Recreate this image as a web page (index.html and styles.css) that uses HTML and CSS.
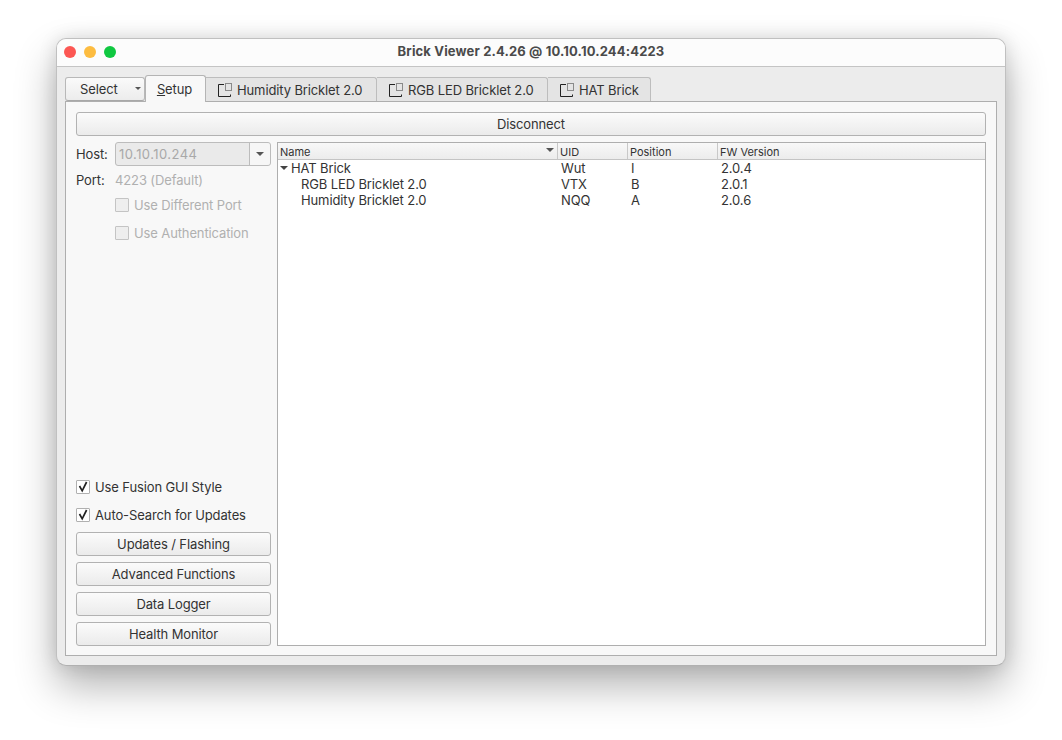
FILE: index.html
```html
<!DOCTYPE html>
<html lang="en">
<head>
<meta charset="utf-8">
<title>Brick Viewer</title>
<link rel="stylesheet" href="styles.css">
</head>
<body>
<div class="window">
  <header class="titlebar">
    <div class="lights"><span class="light red"></span><span class="light yellow"></span><span class="light green"></span></div>
    <div class="title">Brick Viewer 2.4.26 @ 10.10.10.244:4223</div>
  </header>
  <div class="content">
    <div class="tabbar">
      <div class="select">Select<span class="caret small"></span></div>
      <div class="tab active"><span><u>S</u>etup</span></div>
      <div class="tab w171"><svg class="ticon" width="14" height="14" viewBox="0 0 14 14"><path d="M6 1.5H.5V13.5H12.5V11.5" fill="none" stroke="#222"/><rect x="7.5" y=".5" width="6" height="7" fill="none" stroke="#8a8a8a"/></svg><span>Humidity Bricklet 2.0</span></div>
      <div class="tab w171"><svg class="ticon" width="14" height="14" viewBox="0 0 14 14"><path d="M6 1.5H.5V13.5H12.5V11.5" fill="none" stroke="#222"/><rect x="7.5" y=".5" width="6" height="7" fill="none" stroke="#8a8a8a"/></svg><span>RGB LED Bricklet 2.0</span></div>
      <div class="tab w103"><svg class="ticon" width="14" height="14" viewBox="0 0 14 14"><path d="M6 1.5H.5V13.5H12.5V11.5" fill="none" stroke="#222"/><rect x="7.5" y=".5" width="6" height="7" fill="none" stroke="#8a8a8a"/></svg><span>HAT Brick</span></div>
    </div>
    <div class="pane">
      <button class="btn">Disconnect</button>
      <div class="main">
        <aside class="side">
          <div class="host-row">
            <label class="lbl">Host:</label>
            <div class="combo"><span class="combo-text">10.10.10.244</span><span class="combo-arrow"><span class="caret"></span></span></div>
          </div>
          <div class="port-row"><label class="lbl">Port:</label><span class="port-val">4223 (Default)</span></div>
          <div class="check disabled indent first"><span class="box"></span>Use Different Port</div>
          <div class="check disabled indent"><span class="box"></span>Use Authentication</div>
          <div class="spacer"></div>
          <div class="check"><span class="box"><svg width="12" height="12" viewBox="0 0 12 12"><path d="M2.5 5 5.2 9.8 9.6 1" fill="none" stroke="#222" stroke-width="1.7"/></svg></span>Use Fusion GUI Style</div>
          <div class="check second"><span class="box"><svg width="12" height="12" viewBox="0 0 12 12"><path d="M2.5 5 5.2 9.8 9.6 1" fill="none" stroke="#222" stroke-width="1.7"/></svg></span>Auto-Search for Updates</div>
          <div class="actions">
            <button class="btn">Updates / Flashing</button>
            <button class="btn">Advanced Functions</button>
            <button class="btn">Data Logger</button>
            <button class="btn">Health Monitor</button>
          </div>
        </aside>
        <section class="tree">
          <div class="row head">
            <div class="c name">Name<span class="caret sort"></span></div>
            <div class="c uid">UID</div>
            <div class="c pos">Position</div>
            <div class="c fw">FW Version</div>
          </div>
          <div class="body">
            <div class="row item"><div class="c name parent"><span class="caret expand"></span>HAT Brick</div><div class="c uid">Wut</div><div class="c pos">I</div><div class="c fw">2.0.4</div></div>
            <div class="row item"><div class="c name child">RGB LED Bricklet 2.0</div><div class="c uid">VTX</div><div class="c pos">B</div><div class="c fw">2.0.1</div></div>
            <div class="row item"><div class="c name child">Humidity Bricklet 2.0</div><div class="c uid">NQQ</div><div class="c pos">A</div><div class="c fw">2.0.6</div></div>
          </div>
        </section>
      </div>
    </div>
  </div>
</div>
</body>
</html>
```
FILE: styles.css
```css
* { box-sizing: border-box; }
html, body { margin: 0; height: 100%; }
body {
  width: 1062px; height: 740px; overflow: hidden; background: #fff;
  padding: 38px 56px 74px;
  font-family: Inter, "Liberation Sans", sans-serif;
  font-size: 13px; color: #333; letter-spacing: -.12px;
}
.window {
  width: 950px; height: 628px; display: flex; flex-direction: column;
  border-radius: 10px; background: #ececec; border: 1px solid #c0c0c0; border-bottom-color: #b0b0b0;
  box-shadow: 0 20px 40px rgba(0,0,0,.3), 0 0 18px rgba(0,0,0,.12);
}
.titlebar {
  height: 28px; flex: none; position: relative; display: flex; align-items: center; justify-content: center;
  padding-bottom: 3px;
  background: #fcfcfc; border-bottom: 1px solid #c4c4c4; border-radius: 9px 9px 0 0;
}
.lights { position: absolute; left: 7px; top: 7px; display: flex; gap: 8px; }
.light { width: 12px; height: 12px; border-radius: 50%; }
.red { background: #fc5753; }
.yellow { background: #fdbc40; }
.green { background: #10c841; }
.title { font-weight: 700; font-size: 13px; color: #4a4a4a; letter-spacing: .15px; }
.content { flex: 1; padding: 8px 8px 9px; display: flex; flex-direction: column; min-height: 0; }
.tabbar { display: flex; height: 26px; flex: none; align-items: flex-end; position: relative; z-index: 1; }
.select {
  width: 80px; height: 24px; position: relative; display: flex; align-items: center; padding-left: 14px;
  background: linear-gradient(#fafafa, #ececec); border: 1px solid #b8b8b8; border-bottom-color: #a8a8a8; border-radius: 3px;
}
.caret { display: inline-block; width: 0; height: 0; border-left: 4px solid transparent; border-right: 4px solid transparent; border-top: 4px solid #555; }
.caret.small { position: absolute; right: 3px; top: 9px; border-left-width: 3px; border-right-width: 3px; border-top-width: 3px; }
.tab {
  height: 24px; display: flex; align-items: center; gap: 5px; padding: 1px 0 0 12px;
  background: #e4e4e4; border: 1px solid #bdbdbd; border-left: 0; border-bottom: 0; border-radius: 0 3px 0 0;
}
.tab.active {
  width: 61px; height: 27px; margin-bottom: -1px; justify-content: center; padding: 0 2px 0 0;
  background: #f8f8f8; border: 1px solid #b4b4b4; border-bottom: 0; border-radius: 3px 3px 0 0;
}
.w171 { width: 171px; }
.w103 { width: 103px; }
.ticon { flex: none; }
.pane {
  flex: 1; min-height: 0; display: flex; flex-direction: column; gap: 6px;
  background: #f8f8f8; border: 1px solid #aeaeae; padding: 10px 10px 9px;
}
.btn {
  display: block; width: 100%; height: 24px; padding: 0; font: inherit; color: inherit; letter-spacing: inherit;
  background: linear-gradient(#fbfbfb, #ebebeb); border: 1px solid #b2b2b2; border-radius: 3px;
}
.main { flex: 1; min-height: 0; display: flex; gap: 6px; }
.side { width: 195px; flex: none; display: flex; flex-direction: column; }
.host-row { display: flex; align-items: center; height: 24px; }
.lbl { width: 39px; flex: none; color: #333; }
.combo {
  flex: 1; height: 24px; display: flex; background: #eaeaea; border: 1px solid #bcbcbc; border-radius: 3px; color: #a8a8a8;
}
.combo-text { flex: 1; padding-left: 3px; line-height: 22px; letter-spacing: .45px; }
.combo-arrow { width: 21px; display: flex; align-items: center; justify-content: center; border-left: 1px solid #bcbcbc; background: #f6f6f6; border-radius: 0 3px 3px 0; }
.port-row { display: flex; height: 16px; margin-top: 6px; align-items: center; }
.port-val { color: #b0b0b0; }
.check { display: flex; align-items: center; height: 14px; gap: 5px; }
.check.indent { margin-left: 39px; margin-top: 14px; }
.check.first { margin-top: 10px; }
.check.second { margin-top: 14px; }
.check.disabled { color: #b0b0b0; }
.box { width: 14px; height: 14px; flex: none; display: flex; align-items: center; justify-content: center; background: #fff; border: 1px solid #b0b0b0; border-radius: 1px; }
.disabled .box { background: #eeeeee; border-color: #c4c4c4; }
.spacer { flex: 1; }
.actions { display: flex; flex-direction: column; gap: 6px; margin-top: 10px; }
.tree { flex: 1; min-width: 0; display: flex; flex-direction: column; background: #fff; border: 1px solid #aeaeae; }
.row { display: flex; }
.head { height: 17px; flex: none; background: linear-gradient(#f8f8f8, #ececec); border-bottom: 1px solid #c4c4c4; font-size: 11px; line-height: 18px; letter-spacing: 0; }
.c { flex: none; position: relative; }
.name { width: 280px; }
.uid { width: 70px; }
.pos { width: 90px; }
.fw { flex: 1; }
.head .c { padding-left: 2px; border-right: 1px solid #c8c8c8; }
.head .fw { border-right: 0; }
.caret.sort { position: absolute; right: 3px; top: 5px; }
.body { flex: 1; }
.item { height: 16px; line-height: 16px; }
.item .uid, .item .pos, .item .fw { padding-left: 3px; }
.parent { padding-left: 13px; }
.child { padding-left: 23px; }
.caret.expand { position: absolute; left: 2px; top: 6px; border-top-color: #444; }
```
